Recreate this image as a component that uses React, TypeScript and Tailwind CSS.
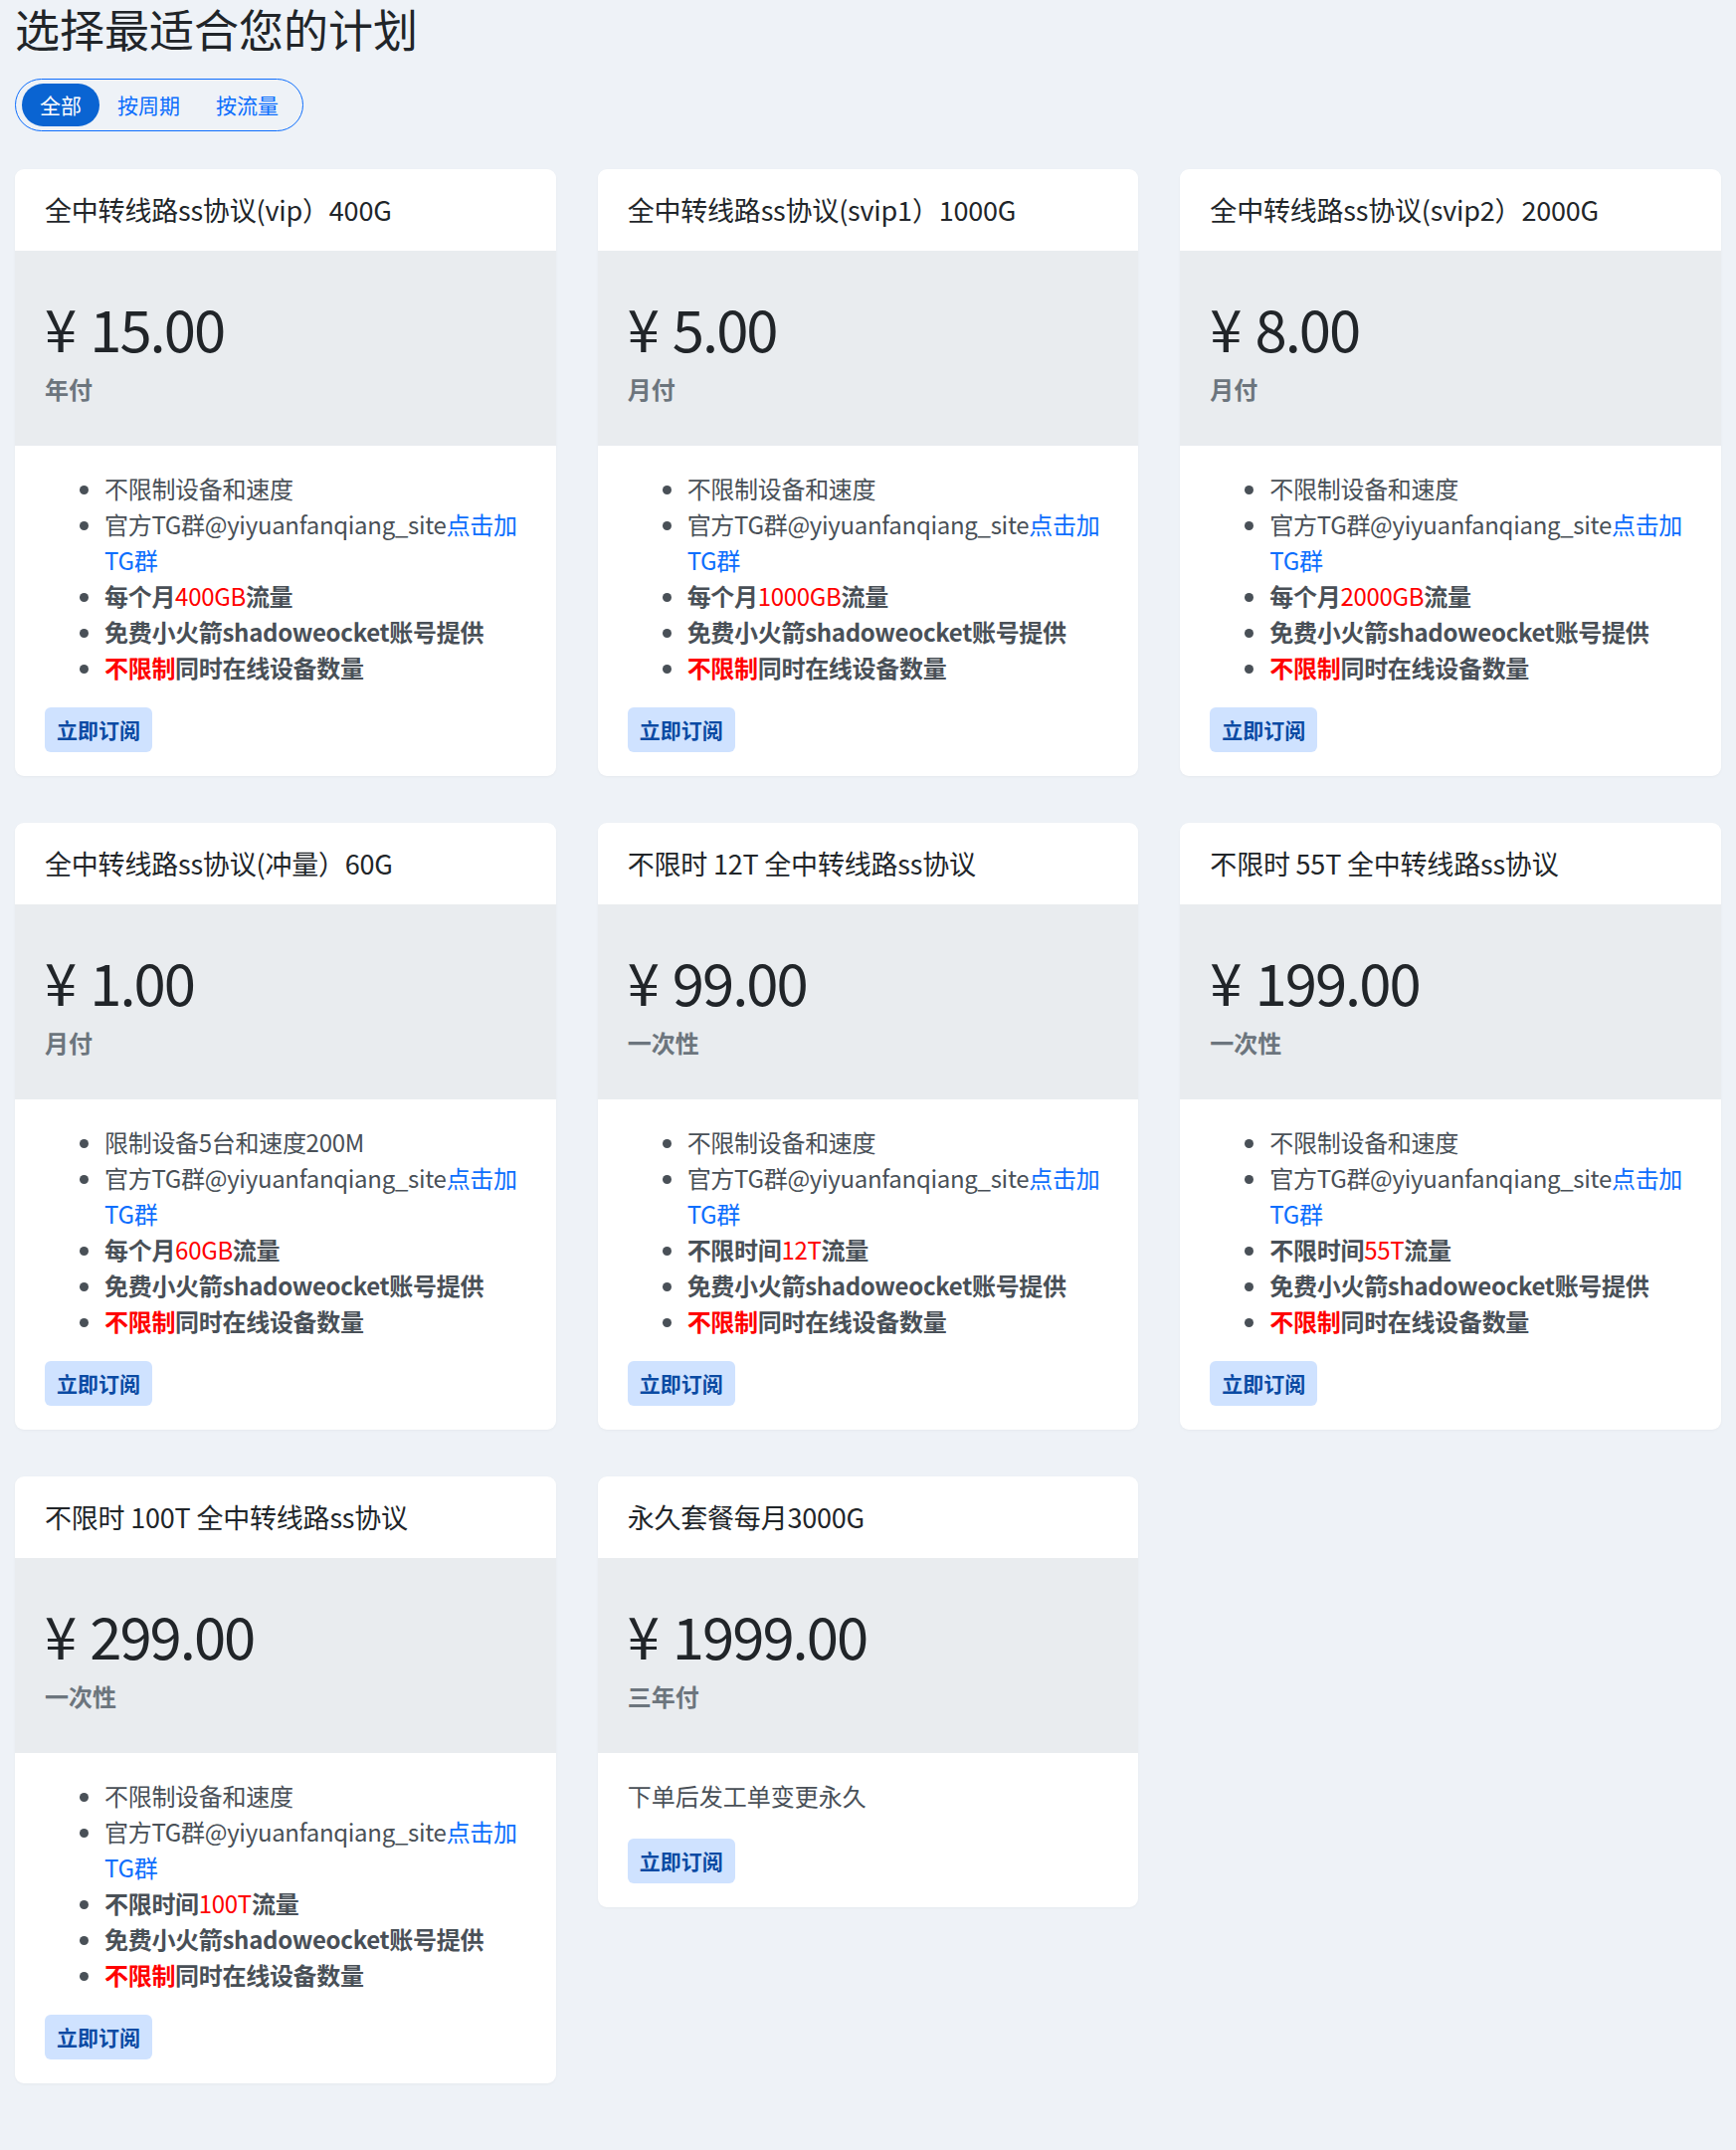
import React from 'react'

type Plan = {
  title: string
  price: string
  period: string
  features?: 'vip' | 'once'
  amount?: string
  firstLine?: string
  note?: string
}

const PLANS: Plan[] = [
  { title: '全中转线路ss协议(vip）400G', price: '15.00', period: '年付', features: 'vip', amount: '400GB' },
  { title: '全中转线路ss协议(svip1）1000G', price: '5.00', period: '月付', features: 'vip', amount: '1000GB' },
  { title: '全中转线路ss协议(svip2）2000G', price: '8.00', period: '月付', features: 'vip', amount: '2000GB' },
  { title: '全中转线路ss协议(冲量）60G', price: '1.00', period: '月付', features: 'vip', amount: '60GB', firstLine: '限制设备5台和速度200M' },
  { title: '不限时 12T 全中转线路ss协议', price: '99.00', period: '一次性', features: 'once', amount: '12T' },
  { title: '不限时 55T 全中转线路ss协议', price: '199.00', period: '一次性', features: 'once', amount: '55T' },
  { title: '不限时 100T 全中转线路ss协议', price: '299.00', period: '一次性', features: 'once', amount: '100T' },
  { title: '永久套餐每月3000G', price: '1999.00', period: '三年付', note: '下单后发工单变更永久' },
]

function Features({ plan }: { plan: Plan }) {
  return (
    <ul className="list-disc pl-[60px] mb-[22px] text-[24px] leading-[36px] tracking-[-0.3px] text-[#495057] marker:text-[#495057]">
      <li>{plan.firstLine ?? '不限制设备和速度'}</li>
      <li>
        官方TG群@yiyuanfanqiang_site<a className="text-[#0d6efd]">点击加TG群</a>
      </li>
      <li className="font-bold">
        {plan.features === 'vip' ? '每个月' : '不限时间'}
        <span className="text-[#ff0000] font-normal">{plan.amount}</span>流量
      </li>
      <li className="font-bold">免费小火箭shadoweocket账号提供</li>
      <li className="font-bold">
        <span className="text-[#ff0000]">不限制</span>同时在线设备数量
      </li>
    </ul>
  )
}

function PlanCard({ plan }: { plan: Plan }) {
  return (
    <div className="bg-white rounded-[9px] overflow-hidden shadow-[0_1px_3px_rgba(0,0,0,0.04)]">
      {/* header */}
      <div className="px-[30px] py-[20px] text-[27px] leading-[42px] tracking-[-0.2px] text-[#212529]">{plan.title}</div>

      {/* price */}
      <div className="bg-[#e9ecef] px-[30px] pt-[41px] pb-[39px]">
        <div className="text-[58px] leading-[72px] text-[#212529]">
          ¥ <span className="tracking-[-2px]">{plan.price}</span>
        </div>
        <div className="mt-[8px] text-[24px] leading-[36px] font-bold text-[#6c757d]">{plan.period}</div>
      </div>

      {/* body */}
      <div className="px-[30px] pt-[25px] pb-[24px]">
        {plan.note ? (
          <p className="mb-[25px] text-[24px] leading-[36px] text-[#495057]">{plan.note}</p>
        ) : (
          <Features plan={plan} />
        )}
        <button className="h-[45px] px-[12px] rounded-[6px] bg-[#cfe2ff] text-[#0a4aa3] text-[21px] leading-[45px] font-bold">
          立即订阅
        </button>
      </div>
    </div>
  )
}

export default function App() {
  return (
    <div
      className="min-h-[2161px] bg-[#eef2f7] px-[15px] pt-[2px]"
      style={{ fontFamily: '"Noto Sans CJK SC", "Noto Sans", sans-serif' }}
    >
      <h1 className="text-[45px] leading-[54px] text-[#212529]">选择最适合您的计划</h1>

      {/* tabs */}
      <div className="mt-[23px] inline-flex items-center border border-[#0d6efd] rounded-full px-[6px] py-[4px]">
        <span className="h-[43px] px-[18px] rounded-full bg-[#0a64d2] text-white text-[21px] leading-[43px]">全部</span>
        <span className="h-[43px] px-[18px] text-[#0d6efd] text-[21px] leading-[43px]">按周期</span>
        <span className="h-[43px] px-[18px] text-[#0d6efd] text-[21px] leading-[43px]">按流量</span>
      </div>

      <div className="mt-[38px] grid grid-cols-3 gap-x-[42px] gap-y-[47px] items-start">
        {PLANS.map((p) => (
          <PlanCard key={p.title} plan={p} />
        ))}
      </div>
    </div>
  )
}
